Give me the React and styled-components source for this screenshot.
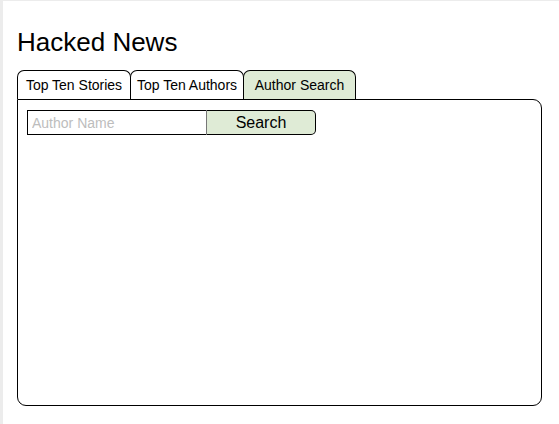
import React, { useState } from "react";
import styled, { createGlobalStyle } from "styled-components";

const GlobalStyle = createGlobalStyle`
  html, body {
    margin: 0;
    padding: 0;
    background: #fff;
  }
  body {
    font-family: "Liberation Sans", Arial, Helvetica, sans-serif;
    color: #000;
  }
`;

const Page = styled.div`
  box-sizing: border-box;
  height: 100vh;
  border-left: 3px solid #ececec;
  border-top: 1px solid #ececec;
  padding: 26px 0 0 14px;
`;

const Title = styled.h1`
  margin: 0 0 13px 0;
  font-size: 26px;
  line-height: 30px;
  font-weight: normal;
`;

const TabBar = styled.div`
  display: flex;
  align-items: flex-end;
`;

const Tab = styled.button`
  box-sizing: border-box;
  height: 29px;
  width: ${p => p.width}px;
  margin-left: ${p => (p.first ? 0 : -1)}px;
  padding: 0;
  border: 1px solid #000;
  border-bottom: none;
  border-radius: 7px 7px 0 0;
  background: ${p => (p.active ? "#dfebd6" : "#fff")};
  font-family: inherit;
  font-size: 14px;
  color: #000;
  cursor: pointer;
`;

const Panel = styled.div`
  box-sizing: border-box;
  width: 525px;
  height: 307px;
  border: 1px solid #000;
  border-radius: 0 9px 9px 9px;
  padding: 10px 9px;
`;

const SearchRow = styled.form`
  display: flex;
  height: 25px;
`;

const NameInput = styled.input`
  box-sizing: border-box;
  width: 179px;
  height: 25px;
  border: 1px solid #000;
  border-right: none;
  padding: 0 4px;
  font-family: inherit;
  font-size: 14px;
  outline: none;
  &::placeholder {
    color: #bdbdbd;
  }
`;

const SearchButton = styled.button`
  box-sizing: border-box;
  width: 110px;
  height: 25px;
  border: 1px solid #000;
  border-left: 1px solid #777;
  border-radius: 0 5px 5px 0;
  background: #dfebd6;
  font-family: inherit;
  font-size: 16px;
  color: #000;
  padding: 0;
`;

const tabs = [
  { label: "Top Ten Stories", width: 114 },
  { label: "Top Ten Authors", width: 114 },
  { label: "Author Search", width: 113 },
];

export default function App() {
  const [active, setActive] = useState(2);
  const [name, setName] = useState("");

  return (
    <Page>
      <GlobalStyle />
      <Title>Hacked News</Title>
      <TabBar>
        {tabs.map((t, i) => (
          <Tab
            key={t.label}
            first={i === 0}
            width={t.width}
            active={i === active}
            onClick={() => setActive(i)}
          >
            {t.label}
          </Tab>
        ))}
      </TabBar>
      <Panel>
        <SearchRow onSubmit={e => e.preventDefault()}>
          <NameInput
            placeholder="Author Name"
            value={name}
            onChange={e => setName(e.target.value)}
          />
          <SearchButton type="submit">Search</SearchButton>
        </SearchRow>
      </Panel>
    </Page>
  );
}
